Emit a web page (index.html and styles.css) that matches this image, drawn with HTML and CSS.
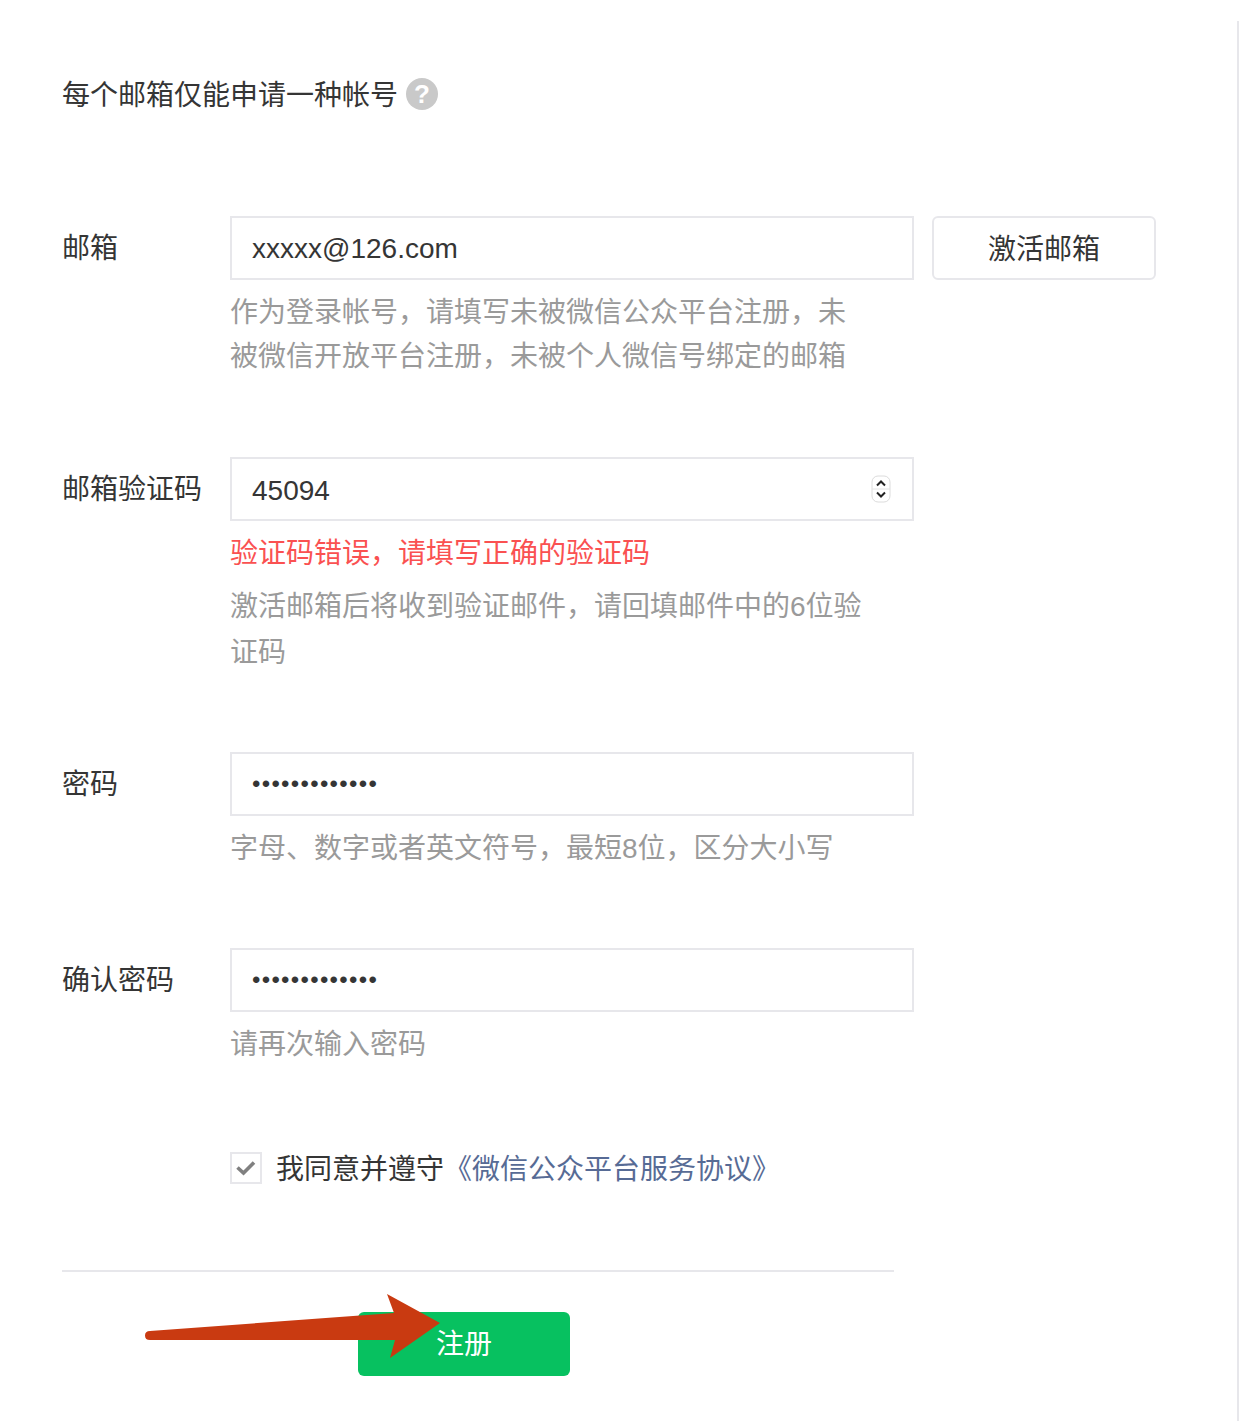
FILE: index.html
```html
<!DOCTYPE html>
<html lang="zh-CN">
<head>
    <meta charset="UTF-8">
    <title>注册</title>
    <link rel="stylesheet" href="styles.css">
</head>
<body>
    <div class="page">
        <div class="tips">
            <span class="tips-text">每个邮箱仅能申请一种帐号</span>
            <i class="help">?</i>
        </div>

        <div class="row row-email">
            <label class="label">邮箱</label>
            <div class="field">
                <div class="input-line">
                    <input class="input input-text" type="text" value="xxxxx@126.com">
                    <button class="btn-active">激活邮箱</button>
                </div>
                <p class="hint">作为登录帐号，请填写未被微信公众平台注册，未<br>被微信开放平台注册，未被个人微信号绑定的邮箱</p>
            </div>
        </div>

        <div class="row row-code">
            <label class="label">邮箱验证码</label>
            <div class="field">
                <div class="input-wrap">
                    <input class="input input-number" type="text" value="45094">
                    <svg class="spinner" width="20" height="28" viewBox="0 0 20 28">
                        <rect x="1" y="1" width="18" height="26" rx="6" fill="#fff" stroke="#dcdcdc" stroke-width="1"/>
                        <line x1="1" y1="14" x2="19" y2="14" stroke="#e4e4e4"/>
                        <path d="M6 10.5 L10 6.5 L14 10.5" fill="none" stroke="#222" stroke-width="2"/>
                        <path d="M6 17.5 L10 21.5 L14 17.5" fill="none" stroke="#222" stroke-width="2"/>
                    </svg>
                </div>
                <p class="error">验证码错误，请填写正确的验证码</p>
                <p class="hint hint-code">激活邮箱后将收到验证邮件，请回填邮件中的6位验<br>证码</p>
            </div>
        </div>

        <div class="row row-pwd">
            <label class="label">密码</label>
            <div class="field">
                <input class="input input-pwd" type="password" value="1234567890123">
                <p class="hint">字母、数字或者英文符号，最短8位，区分大小写</p>
            </div>
        </div>

        <div class="row row-confirm">
            <label class="label">确认密码</label>
            <div class="field">
                <input class="input input-pwd" type="password" value="1234567890123">
                <p class="hint">请再次输入密码</p>
            </div>
        </div>

        <div class="agree">
            <span class="checkbox">
                <svg width="20" height="16" viewBox="0 0 20 16">
                    <path d="M1.500 7.500 L7.500 13 L18 2.500" fill="none" stroke="#808080" stroke-width="3.600"/>
                </svg>
            </span>
            <span>我同意并遵守<a class="link" href="#">《微信公众平台服务协议》</a></span>
        </div>

        <div class="tool-bar">
            <button class="btn-submit">注册</button>
        </div>

        <svg class="arrow" width="310" height="80" viewBox="0 0 310 80">
            <path d="M6 37 L250 19 L243 0 L296 29 L246 64 L251 46 L6 46 Q1 46 1 41.500 Q1 37 6 37 Z" fill="#c93a11"/>
        </svg>
    </div>
</body>
</html>
```

FILE: styles.css
```css
html, body {
    margin: 0;
    padding: 0;
    background-color: #fff;
}
body {
    padding-top: 21px;
    font-family: "Liberation Sans", "Noto Sans CJK SC", sans-serif;
    font-size: 28px;
    color: #353535;
}
p {
    margin: 0;
}
.page {
    position: relative;
    box-sizing: border-box;
    width: 1239px;
    height: 1400px;
    padding: 51px 0 0 62px;
    border-right: 2px solid #e7e7eb;
}
.tips {
    display: flex;
    align-items: center;
    height: 44px;
}
.tips-text {
    padding-bottom: 2px;
}
.help {
    width: 32px;
    height: 32px;
    margin-left: 8px;
    border-radius: 50%;
    background-color: #c9c9c9;
    color: #fff;
    font-style: normal;
    font-weight: bold;
    font-size: 26px;
    line-height: 32px;
    text-align: center;
}
.row {
    display: flex;
}
.row-email {
    margin-top: 100px;
}
.row-code {
    margin-top: 78px;
}
.row-pwd {
    margin-top: 76px;
}
.row-confirm {
    margin-top: 77px;
}
.label {
    width: 168px;
    flex-shrink: 0;
    line-height: 66px;
}
.field {
    width: 684px;
}
.input-line {
    display: flex;
    width: 926px;
    gap: 18px;
}
.input-wrap {
    position: relative;
}
.input {
    display: block;
    box-sizing: border-box;
    flex-shrink: 0;
    width: 684px;
    height: 64px;
    padding: 0 20px;
    border: 2px solid #e7e7eb;
    border-radius: 0;
    outline: none;
    font-family: inherit;
    font-size: 28px;
    color: #353535;
}
.input-text {
    padding-top: 2px;
}
.input-number {
    padding-top: 4px;
}
.input-pwd {
    font-size: 24px;
    letter-spacing: 1.3px;
}
.spinner {
    position: absolute;
    top: 18px;
    right: 23px;
}
.btn-active {
    box-sizing: border-box;
    width: 224px;
    height: 64px;
    padding-bottom: 4px;
    border: 2px solid #e7e7eb;
    border-radius: 6px;
    background-color: #fff;
    font-family: inherit;
    font-size: 28px;
    color: #353535;
}
.hint {
    margin-top: 11px;
    line-height: 44px;
    color: #9a9a9a;
}
.error {
    margin-top: 11px;
    line-height: 44px;
    color: #fa5151;
}
.error + .hint-code {
    margin-top: 8px;
    line-height: 46px;
}
.agree {
    display: flex;
    align-items: center;
    margin: 78px 0 0 168px;
    height: 44px;
}
.checkbox {
    display: flex;
    align-items: center;
    justify-content: center;
    box-sizing: border-box;
    width: 32px;
    height: 32px;
    margin: 2px 14px 0 0;
    border: 2px solid #e7e7eb;
}
.link {
    color: #576b95;
    text-decoration: none;
}
.tool-bar {
    width: 832px;
    margin-top: 81px;
    padding-top: 40px;
    border-top: 2px solid #e7e7eb;
}
.btn-submit {
    display: block;
    width: 212px;
    height: 64px;
    margin-left: 296px;
    padding-bottom: 6px;
    border: none;
    border-radius: 6px;
    background-color: #07c160;
    font-family: inherit;
    font-size: 28px;
    color: #fff;
}
.arrow {
    position: absolute;
    left: 144px;
    top: 1273px;
}
```
